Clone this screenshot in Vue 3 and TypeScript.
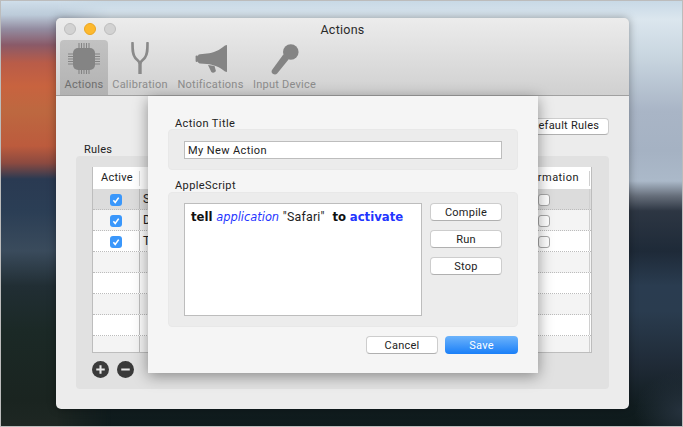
<script setup lang="ts">
const tools = [
  { name: 'Actions', cls: 'w-actions', active: true, icon: 'chip' },
  { name: 'Calibration', cls: 'w-cal', active: false, icon: 'fork' },
  { name: 'Notifications', cls: 'w-not', active: false, icon: 'horn' },
  { name: 'Input Device', cls: 'w-inp', active: false, icon: 'mic' },
];
const rows = [
  { id: 1, name: 'Safari', active: true, hasBox: true },
  { id: 2, name: 'Do', active: true, hasBox: true },
  { id: 3, name: 'Test', active: true, hasBox: true },
  { id: 4, name: '', active: false, hasBox: false },
  { id: 5, name: '', active: false, hasBox: false },
  { id: 6, name: '', active: false, hasBox: false },
  { id: 7, name: '', active: false, hasBox: false },
  { id: 8, name: '', active: false, hasBox: false },
];
const pins = [0, 1, 2, 3, 4];
</script>

<template>
  <div class="stage">
    <div class="window">
      <div class="head">
        <div class="titlebar">
          <div class="lights">
            <span class="light"></span>
            <span class="light amber"></span>
            <span class="light"></span>
          </div>
          <span class="title">Actions</span>
        </div>
        <div class="toolbar">
          <div v-for="t in tools" :key="t.name" class="tool" :class="[t.cls, { on: t.active }]">
            <svg class="ticon" viewBox="0 0 34 34" width="34" height="34" fill="#848484">
              <template v-if="t.icon === 'chip'">
                <rect x="6" y="6" width="22" height="22" rx="5" />
                <g stroke="#848484" stroke-width="1.1">
                  <template v-for="p in pins" :key="p">
                    <line :x1="12 + p * 2.5" y1="1" :x2="12 + p * 2.5" y2="7" />
                    <line :x1="12 + p * 2.5" y1="27" :x2="12 + p * 2.5" y2="32" />
                    <line x1="1" :y1="12 + p * 2.5" x2="7" :y2="12 + p * 2.5" />
                    <line x1="27" :y1="12 + p * 2.5" x2="33" :y2="12 + p * 2.5" />
                  </template>
                </g>
              </template>
              <template v-else-if="t.icon === 'fork'">
                <path d="M9.5 1 C9.5 8 9.5 12 12 15.5 C13.5 18 17 19 17 22 C17 19 20.5 18 22 15.5 C24.5 12 24.5 8 24.5 1" fill="none" stroke="#8a8a8a" stroke-width="2.6" stroke-linecap="round" />
                <rect x="15.3" y="20" width="3.4" height="12" fill="#8a8a8a" />
              </template>
              <template v-else-if="t.icon === 'horn'">
                <path d="M33 3 V30 L31 29.5 C26 25 19 22.5 13 22 L6 21.5 C4.5 21.2 4 20.4 4 19.5 V14 C4 13 4.5 12.4 6 12.2 L13 11.5 C19 11 26 8 31 3.5 Z" />
                <rect x="1.6" y="13.5" width="2.4" height="6.5" rx="1" />
                <path d="M14 23 L20.5 24 L21.8 28.5 C22 30.5 18.5 31.5 17.3 30 Z" />
              </template>
              <template v-else>
                <circle cx="22.8" cy="10" r="7.8" />
                <path d="M15.3 12.5 L20.5 17.6 L9.2 31.5 C7.7 33 5 32.6 4 31 C3.4 30 3.5 29 4 28 Z" />
              </template>
            </svg>
            <span class="tlabel">{{ t.name }}</span>
          </div>
        </div>
      </div>

      <div class="content">
        <button class="btn restore">Restore Default Rules</button>
        <span class="rules-label">Rules</span>
        <div class="rules-box">
          <div class="table">
            <div class="thead">
              <span class="th c-active">Active</span>
              <span class="th c-name"></span>
              <span class="th c-conf">Confirmation</span>
            </div>
            <div
              v-for="(r, i) in rows"
              :key="r.id"
              class="row"
              :class="{ selected: i === 0, alt: i % 2 === 1 }"
            >
              <span class="cell c-active">
                <span v-if="r.hasBox" class="check"><svg viewBox="0 0 12 12" width="12" height="12"><path d="M3.4 6.3 L5.2 8.4 L8.7 3.6" fill="none" stroke="#fff" stroke-width="1.6" /></svg></span>
              </span>
              <span class="cell c-name">{{ r.name }}</span>
              <span class="cell c-conf">
                <span v-if="r.hasBox" class="box"></span>
              </span>
            </div>
          </div>
          <div class="addrem">
            <svg viewBox="0 0 18 18" width="17" height="17"><circle cx="9" cy="9" r="9" fill="#3a3a3a" /><path d="M9 4.5 V13.5 M4.5 9 H13.5" stroke="#e8e8e8" stroke-width="2.2" /></svg>
            <svg viewBox="0 0 18 18" width="17" height="17"><circle cx="9" cy="9" r="9" fill="#3a3a3a" /><path d="M4.5 9 H13.5" stroke="#e8e8e8" stroke-width="2.2" /></svg>
          </div>
        </div>
      </div>

      <div class="sheet">
        <span class="glabel">Action Title</span>
        <div class="group title-group">
          <div class="input">My New Action</div>
        </div>
        <span class="glabel second">AppleScript</span>
        <div class="group script-group">
          <div class="editor">
            <b>tell</b> <i class="blue ital">application</i> <span class="plain">"Safari"</span> <b>to</b> <b class="blue">activate</b>
          </div>
          <div class="side">
            <button class="btn side-btn">Compile</button>
            <button class="btn side-btn">Run</button>
            <button class="btn side-btn">Stop</button>
          </div>
        </div>
        <div class="footer">
          <button class="btn side-btn">Cancel</button>
          <button class="btn side-btn save">Save</button>
        </div>
      </div>
    </div>
  </div>
</template>

<style scoped>
.stage {
  position: relative;
  box-sizing: border-box;
  width: 683px;
  height: 427px;
  overflow: hidden;
  padding: 17px 53px 17px 55px;
  border: 1px solid #bcbcbc;
  display: flex;
  font-family: "Roboto", "Liberation Sans", sans-serif;
  font-size: 11px;
  letter-spacing: 0.25px;
  color: #222;
  background:
    radial-gradient(ellipse 50px 40px at 683px 410px, #26323e 0%, rgba(38, 50, 62, 0) 100%),
    linear-gradient(180deg, #c8d9e6 0, #dbe6ee 18px, #c9d6e0 55px, #a9b5c6 110px, #a5b2c3 150px, #abb9c9 180px, #666e7a 195px, #2d3643 210px, #1e2a38 250px, #2a3c50 285px, #2a3c4f 310px, #1f2a36 365px, #111d20 405px, #0e1a1b 427px);
}
.stage::before {
  content: "";
  position: absolute;
  left: 0;
  top: 0;
  width: 120px;
  height: 100%;
  background: linear-gradient(180deg, #cfdeea 0, #bccbd9 14px, #938ca0 28px, #8a5a68 44px, #b95c48 62px, #c8633f 85px, #bd6840 110px, #bc5b3d 145px, #8c4a40 162px, #2a3a52 178px, #2b3e55 210px, #3a4b5c 250px, #212e34 285px, #1b2926 330px, #1a2420 400px, #1e2723 427px);
  -webkit-mask-image: linear-gradient(90deg, #000 0, #000 56px, transparent 110px);
  mask-image: linear-gradient(90deg, #000 0, #000 56px, transparent 110px);
}
.window {
  position: relative;
  flex: 1;
  display: flex;
  flex-direction: column;
  border-radius: 5px;
  overflow: hidden;
  background: #ececec;
}
.stage::after {
  content: "";
  position: absolute;
  left: 55px;
  top: 17px;
  width: 573px;
  height: 391px;
  border-radius: 5px;
  box-shadow: 0 0 9px rgba(0, 0, 0, 0.35);
  pointer-events: none;
}
.head {
  height: 78px;
  flex: none;
  box-sizing: border-box;
  background: linear-gradient(180deg, #ececec 0%, #d0d0d0 100%);
  border-bottom: 1px solid #a0a0a0;
  display: flex;
  flex-direction: column;
}
.titlebar {
  height: 22px;
  flex: none;
  display: flex;
  align-items: center;
  justify-content: center;
  position: relative;
}
.lights {
  position: absolute;
  left: 8px;
  top: 5px;
  display: flex;
  gap: 8px;
}
.light {
  width: 12px;
  height: 12px;
  box-sizing: border-box;
  border-radius: 50%;
  background: #d2d2d2;
  border: 1px solid #bdbdbd;
}
.amber {
  background: #fdb92e;
  border-color: #eaa520;
}
.title {
  font-size: 12.5px;
  color: #2a2a2a;
  margin-top: 1px;
}
.toolbar {
  flex: 1;
  display: flex;
  padding-left: 4px;
}
.tool {
  display: flex;
  flex-direction: column;
  align-items: center;
  color: #8c8c8c;
}
.tool.on {
  background: linear-gradient(180deg, #c2c2c2 0%, #b2b2b2 100%);
  border-radius: 4px 4px 0 0;
  color: #6e6e6e;
}
.w-actions { width: 48px; }
.w-cal { width: 64px; }
.w-not { width: 77px; }
.w-inp { width: 71px; }
.ticon {
  margin-top: 2px;
  flex: none;
}
.tlabel {
  margin-top: 2px;
  white-space: nowrap;
  line-height: 13px;
}
.content {
  flex: 1;
  display: flex;
  flex-direction: column;
  padding: 22px 20px 20px 20px;
}
.btn {
  box-sizing: border-box;
  font: inherit;
  letter-spacing: inherit;
  color: #222;
  background: #fff;
  border: 1px solid #cdcdcd;
  border-bottom-color: #b0b0b0;
  border-radius: 4px;
  padding: 0;
}
.restore {
  align-self: flex-end;
  height: 17px;
  width: 130px;
  padding-bottom: 2px;
}
.rules-label {
  margin: 8px 0 0 8px;
  line-height: 13px;
}
.rules-box {
  flex: 1;
  background: #e1e1e1;
  border-radius: 4px;
  padding: 11px 17px 0 16px;
}
.table {
  height: 186px;
  box-sizing: border-box;
  border: 1px solid #bdbdbd;
  border-top: 0;
  background: #fff;
  overflow: hidden;
}
.thead {
  height: 22px;
  display: flex;
  align-items: center;
  background: #fff;
  box-sizing: border-box;
}
.th {
  height: 15px;
  line-height: 14px;
  border-right: 1px solid #d8d8d8;
  box-sizing: border-box;
}
.c-active {
  width: 47px;
  flex: none;
  box-sizing: border-box;
}
.th.c-active {
  padding-left: 8px;
}
.c-name {
  flex: 1;
}
.c-conf {
  width: 64px;
  flex: none;
  box-sizing: border-box;
}
.th.c-conf {
  width: 90px;
  text-align: right;
  padding-right: 10px;
  border-right-color: #d0d0d0;
  margin-right: 1px;
  letter-spacing: 0.45px;
}
.row {
  height: 21px;
  box-sizing: border-box;
  display: flex;
  background: #fff;
  border-bottom: 1px dotted #bcbcbc;
}
.row.alt {
  background: #f4f4f4;
}
.row.selected {
  background: #dcdcdc;
}
.cell {
  display: flex;
  align-items: center;
  font-size: 12px;
  color: #222;
  white-space: nowrap;
}
.cell.c-active {
  justify-content: center;
  border-right: 1px solid #bdbdbd;
  padding-top: 2px;
}
.cell.c-name {
  padding-left: 3px;
}
.cell.c-conf {
  padding: 2px 0 0 12px;
  border-right: 1px solid #d0d0d0;
  margin-right: 1px;
}
.check {
  width: 12px;
  height: 12px;
  border-radius: 3px;
  background: #3a97fb;
  display: block;
}
.check svg {
  display: block;
}
.box {
  width: 12px;
  height: 12px;
  box-sizing: border-box;
  border-radius: 3px;
  background: #fff;
  border: 1px solid #a8a8a8;
}
.addrem {
  display: flex;
  gap: 8px;
  margin-top: 8px;
}
.sheet {
  position: absolute;
  left: 92px;
  top: 78px;
  width: 390px;
  height: 277px;
  box-sizing: border-box;
  padding: 22px 20px 0;
  display: flex;
  flex-direction: column;
  background: #f5f5f5;
  box-shadow: 0 3px 14px rgba(0, 0, 0, 0.4);
  letter-spacing: 0.4px;
}
.glabel {
  margin-left: 7px;
  line-height: 12px;
}
.second {
  margin-top: 10px;
}
.group {
  background: #ececec;
  border-radius: 4px;
  border: 1px solid #e8e8e8;
  box-sizing: border-box;
}
.title-group {
  height: 41px;
  margin-top: -1px;
  padding: 11px 15px;
}
.input {
  height: 18px;
  box-sizing: border-box;
  background: #fff;
  border: 1px solid #bdbdbd;
  padding: 1px 0 0 3px;
  line-height: 16px;
  color: #222;
}
.script-group {
  height: 135px;
  padding: 10px 15px;
  display: flex;
  gap: 8px;
}
.editor {
  width: 238px;
  height: 113px;
  box-sizing: border-box;
  background: #fff;
  border: 1px solid #bdbdbd;
  padding: 5px 6px;
  font-family: "DejaVu Sans", "Liberation Sans", sans-serif;
  font-size: 11.7px;
  letter-spacing: 0;
  color: #111;
  line-height: 15px;
  white-space: nowrap;
}
.ital {
  font-size: 11.4px;
}
.plain {
  font-family: "Roboto", "Liberation Sans", sans-serif;
  font-size: 12.4px;
  color: #222;
  letter-spacing: 0.2px;
  margin-right: 4px;
}
.blue {
  color: #1f35ff;
}
.side {
  display: flex;
  flex-direction: column;
  gap: 9px;
}
.side-btn {
  width: 72px;
  height: 18px;
  letter-spacing: 0.25px;
}
.footer {
  margin-top: 9px;
  display: flex;
  justify-content: flex-end;
  gap: 7px;
}
.save {
  width: 73px;
  color: #fff;
  border: 0;
  background: linear-gradient(180deg, #6cb3fb 0%, #1a7ff8 100%);
}
</style>
